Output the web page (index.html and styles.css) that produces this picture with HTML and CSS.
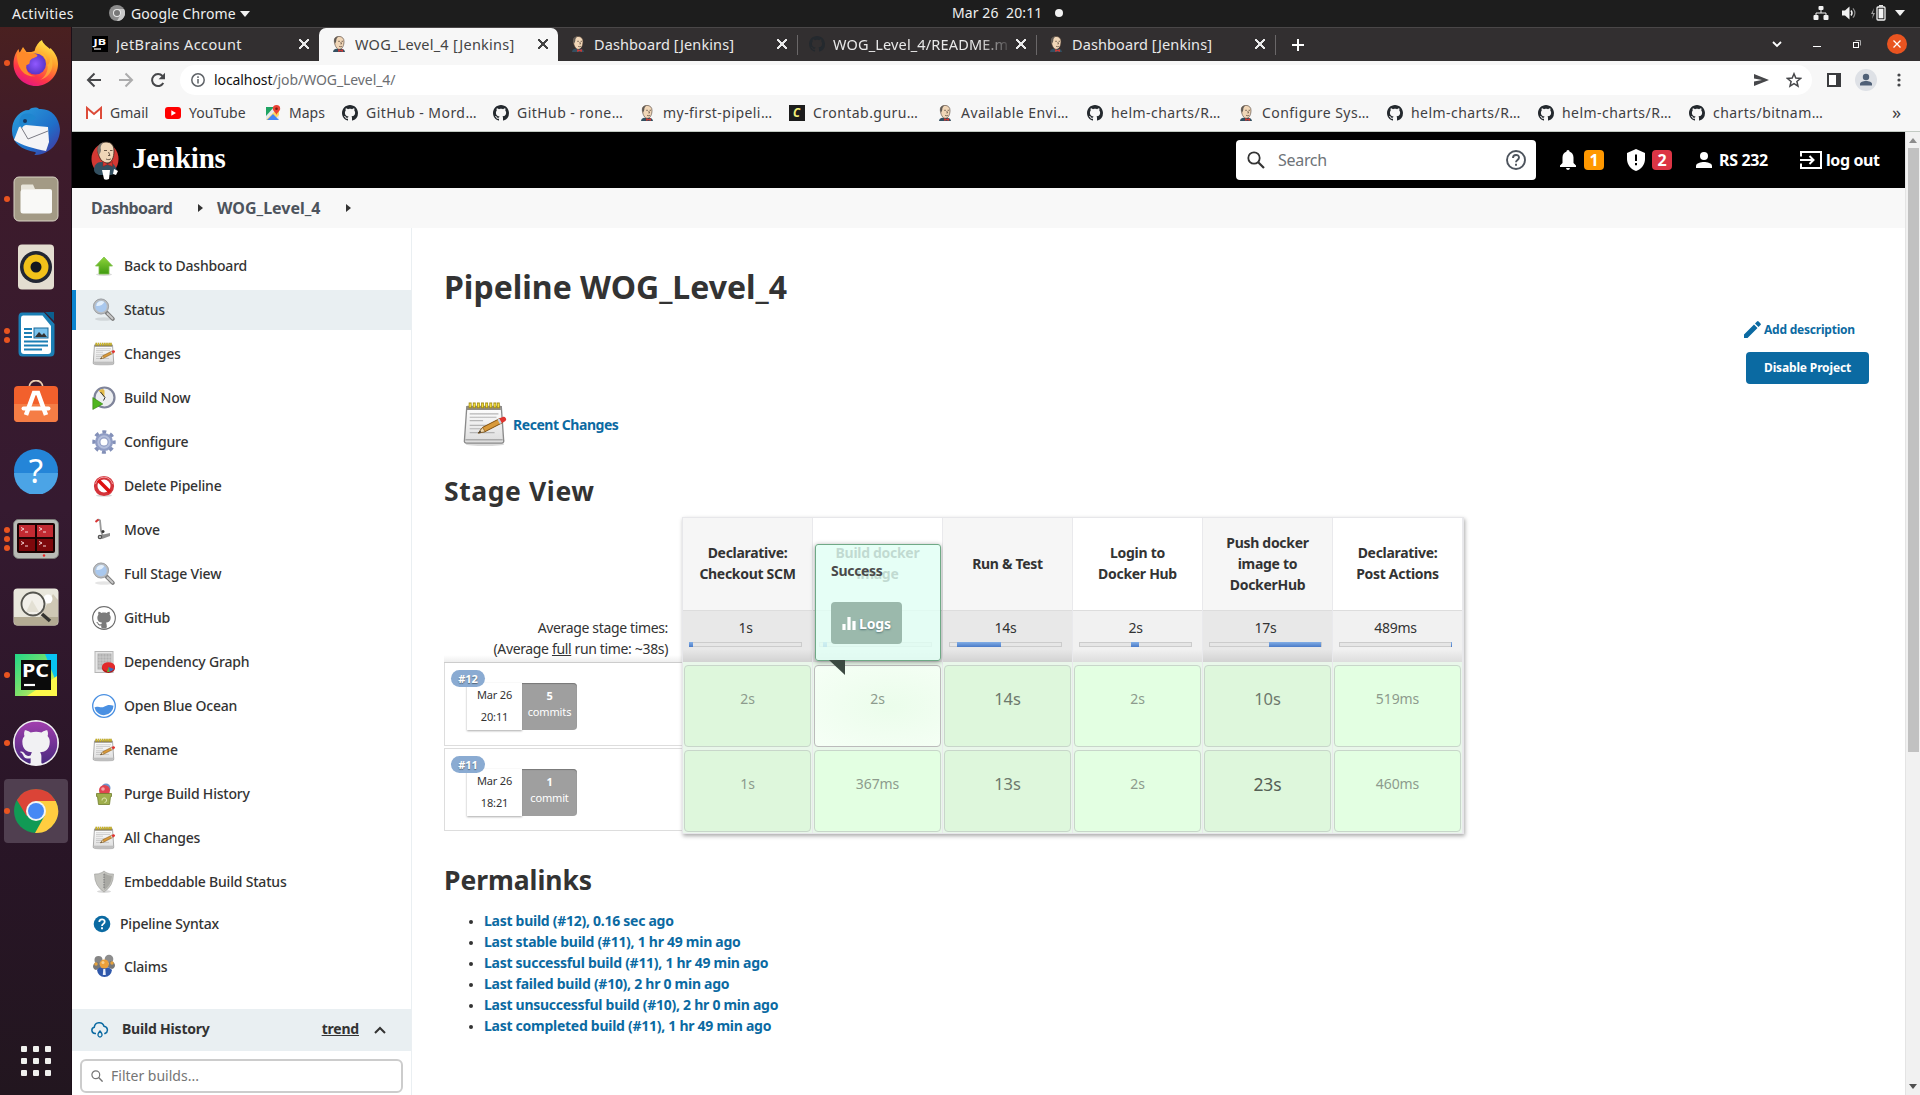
FILE: index.html
```html
<!DOCTYPE html>
<html lang="en">
<head>
<meta charset="utf-8">
<title>WOG_Level_4 [Jenkins]</title>
<link rel="stylesheet" href="styles.css">
</head>
<body>
<svg class="defs" width="0" height="0">
  <defs>
    <linearGradient id="gFox" x1="0.8" y1="0" x2="0.3" y2="1"><stop offset="0" stop-color="#fff44f"/><stop offset="0.4" stop-color="#ff9a2a"/><stop offset="0.75" stop-color="#ff3647"/><stop offset="1" stop-color="#e31587"/></linearGradient>
    <radialGradient id="gOrb"><stop offset="0" stop-color="#9059ff"/><stop offset="1" stop-color="#5b35c8"/></radialGradient>
    <linearGradient id="gBird" x1="0" y1="0" x2="1" y2="1"><stop offset="0" stop-color="#2ba0dd"/><stop offset="0.6" stop-color="#1f6fc9"/><stop offset="1" stop-color="#4a2f9c"/></linearGradient>
    <linearGradient id="gCat" x1="0" y1="0" x2="0" y2="1"><stop offset="0" stop-color="#a13fae"/><stop offset="1" stop-color="#4a2a80"/></linearGradient>
    <linearGradient id="gPage" x1="0" y1="0" x2="0" y2="1"><stop offset="0" stop-color="#fff"/><stop offset="1" stop-color="#dcdcdc"/></linearGradient>
    <linearGradient id="gGreen" x1="0" y1="0" x2="0" y2="1"><stop offset="0" stop-color="#8fd43c"/><stop offset="1" stop-color="#3f9a10"/></linearGradient>
    <linearGradient id="gPy" x1="0" y1="0" x2="1" y2="1"><stop offset="0" stop-color="#21d789"/><stop offset="0.5" stop-color="#7de06a"/><stop offset="1" stop-color="#fcf84a"/></linearGradient>
  </defs>
  <symbol id="octo" viewBox="0 0 16 16"><path d="M8 0C3.58 0 0 3.58 0 8c0 3.54 2.29 6.53 5.47 7.59.4.07.55-.17.55-.38 0-.19-.01-.82-.01-1.49-2.01.37-2.53-.49-2.69-.94-.09-.23-.48-.94-.82-1.13-.28-.15-.68-.52-.01-.53.63-.01 1.08.58 1.23.82.72 1.21 1.87.87 2.33.66.07-.52.28-.87.51-1.07-1.78-.2-3.64-.89-3.64-3.95 0-.87.31-1.59.82-2.15-.08-.2-.36-1.02.08-2.12 0 0 .67-.21 2.2.82.64-.18 1.32-.27 2-.27s1.36.09 2 .27c1.53-1.04 2.2-.82 2.2-.82.44 1.1.16 1.92.08 2.12.51.56.82 1.27.82 2.15 0 3.07-1.87 3.75-3.65 3.95.29.25.54.73.54 1.48 0 1.07-.01 1.93-.01 2.2 0 .21.15.46.55.38A8.01 8.01 0 0016 8c0-4.42-3.58-8-8-8z"/></symbol>
  <symbol id="butler" viewBox="0 0 16 16">
    <path d="M2 16c.2-2 1.300-2.800 3-3.300h5.500c2 .3 3.200 1.300 3.500 3.300z" fill="#335061"/>
    <path d="M3.300 5C3 2 5 .4 8 .4s5.200 2 5 5.200c-.1 3.500-1.300 7.400-4.500 7.700C5.500 13.500 3.500 9 3.300 5z" fill="#f0d6b7" stroke="#4b3b30" stroke-width=".6"/>
    <path d="M3.300 6C2.800 2.500 4.500.6 7.500.4 5.800 1.600 5.200 3 5.300 4.500c0 1-.5 2-1.200 3z" fill="#5f5a55"/>
    <path d="M7.200 5.300h1.700M10.600 5.300h1.500M9.800 6l.7 2h-1M8 10.200c1 .7 2.200.6 3 0" fill="none" stroke="#4b3b30" stroke-width=".7"/>
    <path d="M7.200 13l2.300 1.200 2.400-1.200v2.900l-2.400-1-2.300 1z" fill="#d33833"/>
  </symbol>
  <symbol id="notepad" viewBox="0 0 48 48">
    <ellipse cx="24" cy="45" rx="20" ry="2" fill="#000" opacity=".15"/>
    <path d="M5 6h36l2.500 35.500a2 2 0 0 1-2 2.500H4.500a2 2 0 0 1-2-2.500z" fill="url(#gPage)" stroke="#8b8b8b" stroke-width="1.400"/>
    <path d="M5.500 5h35v4.500H5z" fill="#8f8a80"/><path d="M3.500 40.500h39" stroke="#aaa" stroke-width="1.600"/>
    <path d="M8.500 1.500v6m4.300-6v6m4.300-6v6m4.300-6v6m4.300-6v6m4.300-6v6m4.300-6v6m3.600-6v6" stroke="#a28a12" stroke-width="3"/>
    <path d="M8.500 2.500v4m4.300-4v4m4.300-4v4m4.300-4v4m4.300-4v4m4.300-4v4m4.300-4v4m3.600-4v4" stroke="#f2df3e" stroke-width="1.500"/>
    <path d="M8 13.500h30M8 17h28M8 20.500h14M8 25.500h22M8 29h14M8 33h26" stroke="#b5b5b5" stroke-width="1.200"/>
    <path d="M17 33.500l4.500-6L40 18l2.500 4.500L24 32z" fill="#d99a3a" stroke="#7d4c0c" stroke-width="1"/>
    <path d="M17 33.500l4.500-6 2.500 4.500z" fill="#f0d7ab" stroke="#6b4a1a" stroke-width=".6"/><path d="M17 33.500l2-2.400 1 1.500z" fill="#222"/>
    <path d="M38.500 18.500l2.500 4.700 4-2.200c1.500-1 1.300-2 .6-3.200-.8-1.300-1.900-1.700-3.200-1.200z" fill="#e0342f"/><path d="M37 19.300l2.500 4.700 2-1-2.500-4.700z" fill="#c9d2e0"/>
  </symbol>
  <symbol id="magnify" viewBox="0 0 24 24">
    <ellipse cx="12" cy="21" rx="9" ry="1.800" fill="#000" opacity=".1"/>
    <path d="M14.500 14.500l6.300 6.300" stroke="#7d7d7d" stroke-width="4" stroke-linecap="round"/><path d="M15.500 15.500l5 5" stroke="#c9c9c9" stroke-width="1.800" stroke-linecap="round"/>
    <circle cx="9" cy="8.500" r="6.800" fill="#a9c8ee" stroke="#b9bcc0" stroke-width="2"/><path d="M4.300 8a5 5 0 0 1 8-4c-1 2.500-4.500 4.500-8 4z" fill="#e3effb"/>
    <circle cx="9" cy="8.500" r="7.600" fill="none" stroke="#83878c" stroke-width=".6"/>
  </symbol>
</svg>

<div class="desktop">
  <header class="topbar">
    <div class="topbar-left">
      <span class="activities">Activities</span>
      <svg class="app-ico" width="16" height="16" viewBox="0 0 16 16"><circle cx="8" cy="8" r="8" fill="#8c8c8c"/><path d="M8 4h7a8 8 0 0 1-7 12l4-7z" fill="#c8c8c8"/><circle cx="8" cy="8" r="4" fill="#e9e9e9"/><circle cx="8" cy="8" r="3" fill="#777"/></svg>
      <span class="app-name">Google Chrome</span>
      <i class="caret"></i>
    </div>
    <div class="clock"><span>Mar 26&nbsp; 20:11</span><i class="dot"></i></div>
    <div class="tray">
      <svg width="16" height="14" viewBox="0 0 16 14"><path d="M8 4v3M3 10V7h10v3" fill="none" stroke="#f2f2f2"/><rect x="5.500" y="0" width="5" height="4" rx="1" fill="#f2f2f2"/><rect x="0.500" y="9" width="5" height="5" rx="1" fill="#f2f2f2"/><rect x="10.500" y="9" width="5" height="5" rx="1" fill="#f2f2f2"/></svg>
      <svg width="16" height="14" viewBox="0 0 16 14"><path d="M0 4.500h3L7.500.5v13L3 9.500H0z" fill="#f2f2f2"/><path d="M9 4.500q2 2.500 0 5" fill="none" stroke="#f2f2f2" stroke-width="1.500"/><path d="M11 2.300q3.800 4.700 0 9.400" fill="none" stroke="#8c8c8c" stroke-width="1.200"/></svg>
      <svg width="16" height="16" viewBox="0 0 16 16"><path d="M4 3L1 9h2l-1 5 3-6H3z" fill="#9a9a9a"/><rect x="7" y="2" width="8" height="13" rx="1" fill="none" stroke="#f2f2f2" stroke-width="1.300"/><path d="M9 .8h4" stroke="#f2f2f2" stroke-width="1.500"/><rect x="8.600" y="3.700" width="4.800" height="9.600" fill="#f2f2f2"/></svg>
      <i class="caret"></i>
    </div>
  </header>

  <div class="workspace">
    <nav class="dock">
      <div class="app"><i class="run one"></i><svg width="48" height="48" viewBox="0 0 48 48"><path d="M46 25c0 12-10 22-22 22S1.500 37 1.500 25c0-7 2.500-12 5-15l1 4 3.500-6 3.500 5c4 0 6 0 8-1 1-5 4-9 7.500-11 1 4 5 6 8 9l.5-1c5 5 7.500 10 7.500 16z" fill="url(#gFox)"/><circle cx="23.500" cy="25" r="10.500" fill="url(#gOrb)"/><path d="M5 15c4-4 9-2 12 0 4-1 8 0 8.500 1.500-1 2.500-5 2-7 4.500-2 2 1 4-4 5-1.500 6 3.500 11 9 11-11 2-19-8-18.500-22z" fill="#ff8a2a"/><path d="M27 13c7 2 9 8 8 14 3-3 4-7 3-11 6 10 1 22-10 25 9-5 12-19-1-28z" fill="#ffc23a" opacity=".6"/></svg></div>
      <div class="app"><svg width="48" height="48" viewBox="0 0 48 48"><path d="M17 3c3-3 8-3 10-1 12-1 20 8 21 20 0 14-10 25-24 26-4 0 2-2-1-3C10 43 0 36 0 24c0-8 3-13 6-16 3-3 6-5 11-5z" fill="url(#gBird)"/><path d="M14 18L36 20l1 15-3 9C24 42 8 38 2 33l5-13z" fill="#f4f4f6"/><path d="M9 20l7 12 20-8" fill="none" stroke="#7b7b84" stroke-width="1"/><path d="M10 8c5-3 12-1 14 3-5 4-10 4-14 10-4-4-3-9 0-13z" fill="#1f86cf"/><circle cx="13" cy="14" r="2" fill="#17375e"/></svg></div>
      <div class="app"><i class="run one"></i><svg width="46" height="46" viewBox="0 0 46 46"><rect x="1" y="1" width="44" height="44" rx="5" fill="#a39a85" stroke="#d8d3c4"/><path d="M8 10q0-1.500 1.500-1.500h10.500l2 4.500H37q2 0 2 2v20q0 2-2 2H10q-2 0-2-2z" fill="#e8e5da"/><rect x="7.500" y="13.500" width="31.500" height="24" rx="2.500" fill="#f9f9f7"/></svg></div>
      <div class="app"><svg width="46" height="46" viewBox="0 0 46 46"><rect x="5" y="0.500" width="36" height="45" rx="4" fill="#e3ddd0"/><circle cx="23" cy="23" r="16" fill="#222733"/><circle cx="23" cy="23" r="12.500" fill="#f2c21a"/><circle cx="23" cy="23" r="5.500" fill="#15181f"/></svg></div>
      <div class="app"><i class="run two"></i><svg width="46" height="46" viewBox="0 0 46 46"><path d="M9 .5h22L41.500 12v28q0 4.500-4 4.500H9.500q-4 0-4-4.500V5q0-4.500 3.500-4.500z" fill="#1b7fb5"/><path d="M10 3.500h19.500L38 14v25q0 3-3 3H11q-3 0-3-3V6q0-2.500 2-2.500z" fill="#fff"/><path d="M32 0h9v9z" fill="#0b5f8f"/><path d="M11 17h8M11 21h8M11 25h8M11 29.500h24M11 33.500h24M11 37.500h18" stroke="#1b7fb5" stroke-width="2"/><rect x="21" y="16" width="14" height="10" fill="#7cc4ee" stroke="#1b6a99" stroke-width="1"/><path d="M22 25l4-5 3 3 2-2 3 4z" fill="#333"/></svg></div>
      <div class="app"><svg width="46" height="46" viewBox="0 0 46 46"><path d="M16 8c0-10 14-10 14 0" fill="none" stroke="#e9cdb0" stroke-width="1.800"/><rect x="1" y="6" width="44" height="36" rx="4" fill="#f2602c"/><path d="M1 24h44v14q0 4-4 4H5q-4 0-4-4z" fill="#f57d45"/><path d="M13 35l8-22h4l8 22" fill="none" stroke="#fff" stroke-width="4.500"/><path d="M10.500 28.500h25" stroke="#fff" stroke-width="4" stroke-linecap="round"/></svg></div>
      <div class="app"><svg width="46" height="46" viewBox="0 0 46 46"><circle cx="23" cy="23" r="22" fill="#2485d8"/><path d="M1 25a22 22 0 0 0 44 0z" fill="#4ba4e6"/><text x="23" y="34.500" text-anchor="middle" font-size="33" fill="#fff" class="glyph">?</text></svg></div>
      <div class="app"><i class="run three"></i><svg width="46" height="40" viewBox="0 0 46 40"><rect x="0.500" y="0.500" width="45" height="39" rx="5" fill="#b9bbb6" stroke="#7a7c78"/><rect x="4" y="4" width="38" height="30" rx="2" fill="#1a0203"/><path d="M6 6h16v12H6zM24 6h16v12H24z" fill="#c22a32"/><path d="M6 20h16v12H6zM24 20h16v12H24z" fill="#7d080c"/><path d="M8 8.500l3 1.500-3 1.500M12 13h3M26 8.500l3 1.500-3 1.500M30 13h3M8 22.500l3 1.500-3 1.500M12 27h3M26 22.500l3 1.500-3 1.500M30 27h3" stroke="#f3d6d6" fill="none"/><circle cx="31" cy="36.500" r="1.200" fill="#e22"/></svg></div>
      <div class="app"><svg width="46" height="38" viewBox="0 0 46 38"><rect x="0.500" y="0.500" width="45" height="37" rx="4" fill="#e9e7dc"/><path d="M26 30L40 6l5 6v18z" fill="#cfc8b5"/><path d="M1 29h44v5q0 3.500-4 3.500H5q-4 0-4-3.500z" fill="#b3ab93"/><circle cx="35" cy="11" r="4.500" fill="#fff"/><circle cx="20" cy="16" r="11.500" fill="#f4f3ee" fill-opacity=".8" stroke="#55554f" stroke-width="1.800"/><path d="M13 24l6-12 7 12z" fill="#e3e0d4"/><path d="M29 26l8 7" stroke="#33332f" stroke-width="3.500"/></svg></div>
      <div class="app"><i class="run one"></i><svg width="42" height="42" viewBox="0 0 42 42"><rect width="42" height="42" fill="url(#gPy)"/><path d="M30 0h12v30z" fill="#07c3f2"/><path d="M42 22v20H12z" fill="#fcf84a"/><rect x="6" y="6" width="30" height="30" fill="#0b0b0b"/><text x="7" y="23" font-size="18" font-weight="700" fill="#fff" textLength="27" lengthAdjust="spacingAndGlyphs" class="glyph">PC</text><path d="M9 31h11" stroke="#fff" stroke-width="2.200"/></svg></div>
      <div class="app"><i class="run one"></i><svg width="46" height="46" viewBox="0 0 46 46"><circle cx="23" cy="23" r="23" fill="#f1f1f3"/><g fill="url(#gCat)"><use href="#octo" x="1.500" y="1.500" width="43" height="43"/></g></svg></div>
      <div class="app active"><i class="run one"></i><svg width="46" height="46" viewBox="0 0 46 46"><circle cx="23" cy="23" r="22" fill="#119a55"/><path d="M3.900 12a22 22 0 0 1 38.200 0L42 14H23l-9.500 14z" fill="#db4437"/><path d="M23 13h19.700A22 22 0 0 1 22 45l9.500-17z" fill="#ffcd40"/><circle cx="23" cy="23" r="10" fill="#f4f4f4"/><circle cx="23" cy="23" r="8" fill="#4688f4"/></svg></div>
      <div class="grid9"><i></i><i></i><i></i><i></i><i></i><i></i><i></i><i></i><i></i></div>
    </nav>

    <div class="browser">
      <div class="tabs">
        <div class="tab wide"><svg width="16" height="16" viewBox="0 0 16 16"><rect width="16" height="16" fill="#000"/><text x="1.500" y="8.800" font-size="9" font-weight="700" fill="#fff" textLength="12.500" lengthAdjust="spacingAndGlyphs" class="glyph">JB</text><path d="M2 13h7" stroke="#fff" stroke-width="1.200"/></svg><span>JetBrains Account</span><b class="x"></b></div>
        <div class="tab on"><svg width="16" height="16"><use href="#butler"/></svg><span>WOG_Level_4 [Jenkins]</span><b class="x"></b></div>
        <div class="tab sep"><svg width="16" height="16"><use href="#butler"/></svg><span>Dashboard [Jenkins]</span><b class="x"></b></div>
        <div class="tab sep"><svg width="16" height="16" fill="#24292e"><use href="#octo"/></svg><span class="fade">WOG_Level_4/README.m</span><b class="x"></b></div>
        <div class="tab sep"><svg width="16" height="16"><use href="#butler"/></svg><span>Dashboard [Jenkins]</span><b class="x"></b></div>
        <i class="tabend"></i>
        <svg class="plus" width="14" height="14" viewBox="0 0 14 14"><path d="M7 1v12M1 7h12" stroke="#fff" stroke-width="2"/></svg>
        <div class="winctl">
          <svg width="12" height="12" viewBox="0 0 12 12"><path d="M2 4l4 4 4-4" fill="none" stroke="#fff" stroke-width="1.800"/></svg>
          <svg width="12" height="12" viewBox="0 0 12 12"><path d="M2 8.500h8" stroke="#fff"/></svg>
          <svg width="12" height="12" viewBox="0 0 12 12"><path d="M4.500 2.500h5v5" fill="none" stroke="#aaa"/><rect x="2.500" y="4.500" width="5" height="5" fill="none" stroke="#fff"/></svg>
          <svg width="20" height="20" viewBox="0 0 20 20"><circle cx="10" cy="10" r="10" fill="#e95420"/><path d="M6.500 6.500l7 7m0-7l-7 7" stroke="#fff" stroke-width="1.300"/></svg>
        </div>
      </div>
      <div class="toolbar">
        <div class="navs">
          <svg width="16" height="16" viewBox="0 0 16 16"><path d="M15 8H2.500M8.500 1.500L2 8l6.500 6.500" fill="none" stroke="#46474a" stroke-width="2"/></svg>
          <svg width="16" height="16" viewBox="0 0 16 16"><path d="M1 8h12.500M7.500 1.500L14 8l-6.500 6.500" fill="none" stroke="#acacad" stroke-width="2"/></svg>
          <svg width="16" height="16" viewBox="0 0 16 16"><path d="M13.300 11A6 6 0 1 1 12.500 4" fill="none" stroke="#46474a" stroke-width="2"/><path d="M15 .8v6.400H8.600z" fill="#46474a"/></svg>
        </div>
        <div class="omnibox">
          <svg width="14" height="14" viewBox="0 0 14 14"><circle cx="7" cy="7" r="6.200" fill="none" stroke="#5f6368" stroke-width="1.500"/><path d="M7 6v4.500M7 3.300v1.600" stroke="#5f6368" stroke-width="1.500"/></svg>
          <span class="url"><b>localhost</b>/job/WOG_Level_4/</span>
          <svg width="15" height="12" viewBox="0 0 15 12"><path d="M0 0l15 6-15 6V7.500L8 6 0 4.500z" fill="#46474a"/></svg>
          <svg width="16" height="16" viewBox="0 0 16 16"><path d="M8 1.800l1.800 4.300 4.700.4-3.600 3 1.100 4.600L8 11.700 4 14.100l1.100-4.600-3.600-3 4.700-.4z" fill="none" stroke="#46474a" stroke-width="1.500"/></svg>
        </div>
        <svg class="panel" width="14" height="14" viewBox="0 0 14 14"><rect x="1" y="1" width="12" height="12" fill="#fff" stroke="#3b3c3f" stroke-width="2"/><path d="M9 1h4v12H9z" fill="#3b3c3f"/></svg>
        <svg class="avatar" width="22" height="22" viewBox="0 0 22 22"><circle cx="11" cy="11" r="11" fill="#dee1e6"/><circle cx="11" cy="8" r="3.200" fill="#4f6077"/><path d="M5 16.500v-1.500c0-2 3-3 6-3s6 1 6 3v1.500z" fill="#4f6077"/></svg>
        <svg width="4" height="14" viewBox="0 0 4 14"><circle cx="2" cy="2" r="1.600" fill="#46474a"/><circle cx="2" cy="7" r="1.600" fill="#46474a"/><circle cx="2" cy="12" r="1.600" fill="#46474a"/></svg>
      </div>
      <div class="bookmarks">
        <a><svg width="16" height="14" viewBox="0 0 16 14"><path d="M1 13V2l7 6 7-6v11" fill="#fff" stroke="#dd4b39" stroke-width="2"/></svg>Gmail</a>
        <a><svg width="16" height="12" viewBox="0 0 16 12"><rect width="16" height="12" rx="3" fill="#f00"/><path d="M6.300 3.300v5.400L11 6z" fill="#fff"/></svg>YouTube</a>
        <a><svg width="16" height="16" viewBox="0 0 16 16"><rect x="1" y="2" width="13" height="13" rx="1" fill="#e8eaed"/><path d="M1 2h8L1 11z" fill="#1fa463"/><path d="M1 15L13 3l1 2v5L9 15z" fill="#fdd663"/><path d="M2 15l6-6 6 6z" fill="#4285f4"/><path d="M11.500 0a3.700 3.700 0 0 0-3.700 3.700c0 2.500 3 3.300 3.700 6.300.7-3 3.700-3.800 3.700-6.300A3.700 3.700 0 0 0 11.500 0z" fill="#ea4335"/><circle cx="11.500" cy="3.700" r="1.300" fill="#7d1c12"/></svg>Maps</a>
        <a><svg width="16" height="16" fill="#24292e"><use href="#octo"/></svg>GitHub - Mord…</a>
        <a><svg width="16" height="16" fill="#24292e"><use href="#octo"/></svg>GitHub - rone…</a>
        <a><svg width="16" height="16"><use href="#butler"/></svg>my-first-pipeli…</a>
        <a><svg width="16" height="16" viewBox="0 0 16 16"><rect width="16" height="16" fill="#1c1c1c"/><text x="4" y="12.300" font-size="11.500" font-style="italic" font-weight="700" fill="#f5f07a" class="glyph">C</text></svg>Crontab.guru…</a>
        <a><svg width="16" height="16"><use href="#butler"/></svg>Available Envi…</a>
        <a><svg width="16" height="16" fill="#24292e"><use href="#octo"/></svg>helm-charts/R…</a>
        <a><svg width="16" height="16"><use href="#butler"/></svg>Configure Sys…</a>
        <a><svg width="16" height="16" fill="#24292e"><use href="#octo"/></svg>helm-charts/R…</a>
        <a><svg width="16" height="16" fill="#24292e"><use href="#octo"/></svg>helm-charts/R…</a>
        <a><svg width="16" height="16" fill="#24292e"><use href="#octo"/></svg>charts/bitnam…</a>
        <span class="more">»</span>
      </div>

      <div class="viewport">
        <div class="page">
          <div class="jheader">
            <svg class="jlogo" width="28" height="39" viewBox="0 0 28 39"><ellipse cx="14" cy="18" rx="13.500" ry="15.500" fill="#d33833"/><path d="M3 29c0-5 3-8 7-8h8c5 1 7 5 8 9-2 2-4 4-7 4H8c-3-1-5-3-5-5z" fill="#335061"/><path d="M7 11C6 5 10 1 15 1s8 3 8 9c0 6-2 12-7 12S8 17 7 11z" fill="#f0d6b7" stroke="#33251b" stroke-width=".8"/><path d="M7 12C5 6 8 2 13 1.200 10 3 9 6 10 9c0 2-1 3-2 5z" fill="#7a746e"/><path d="M13 9.500h3M19 9.500h2.500M17.500 11l1.500 3.500h-2M15 18c2 1 4 .7 5-.3" stroke="#4b3b30" fill="none" stroke-width=".8"/><path d="M12 20.500l4.500 2.500 5-2.500v5l-5-2-4.500 2z" fill="#d33833" stroke="#81201c" stroke-width=".5"/><path d="M11 29h8l-1 9c-2 1-4 1-5 0zM23 28l4 2-2 4-3-1z" fill="#fff"/></svg>
            <span class="brand">Jenkins</span>
            <div class="search">
              <svg width="18" height="18" viewBox="0 0 18 18"><circle cx="7" cy="7" r="5.700" fill="none" stroke="#333" stroke-width="1.800"/><path d="M11.200 11.200l5.800 5.800" stroke="#333" stroke-width="2.200"/></svg>
              <span>Search</span>
              <svg width="20" height="20" viewBox="0 0 20 20"><circle cx="10" cy="10" r="9" fill="none" stroke="#4d545d" stroke-width="1.900"/><path d="M7 8c0-4 6-4 6-.5C13 10 10 9.800 10 12.300" fill="none" stroke="#4d545d" stroke-width="1.900"/><path d="M10 13.700v2" stroke="#4d545d" stroke-width="1.900"/></svg>
            </div>
            <svg class="bell" width="16" height="20" viewBox="0 0 16 20"><path d="M8 0a1.600 1.600 0 0 1 1.600 1.700C12 2.500 13.500 4.500 13.500 7.500v5.500L16 15.500V17H0v-1.500L2.500 13V7.500c0-3 1.500-5 3.900-5.800A1.600 1.600 0 0 1 8 0zM6 18h4q-.3 2-2 2t-2-2z" fill="#fff"/></svg>
            <span class="badge warn">1</span>
            <svg class="shield" width="18" height="22" viewBox="0 0 18 22"><path d="M9 0l9 4v6c0 5.500-3.800 10.500-9 12-5.200-1.500-9-6.500-9-12V4z" fill="#fff"/><path d="M9 5.500v6.500M9 14v2.200" stroke="#000" stroke-width="2"/></svg>
            <span class="badge alert">2</span>
            <svg class="user" width="16" height="16" viewBox="0 0 16 16"><circle cx="8" cy="4" r="4" fill="#fff"/><path d="M0 16v-2c0-3 5-4 8-4s8 1 8 4v2z" fill="#fff"/></svg>
            <span class="uname">RS 232</span>
            <svg class="exit" width="22" height="18" viewBox="0 0 22 18"><path d="M1 5.500V1h20v16H1v-4.500" fill="none" stroke="#fff" stroke-width="2"/><path d="M0 9h13M9.500 5l4 4-4 4" fill="none" stroke="#fff" stroke-width="2"/></svg>
            <span class="logout">log out</span>
          </div>
          <div class="crumbs"><span class="c1">Dashboard</span><i></i><span class="c2">WOG_Level_4</span><i></i></div>

          <div class="body">
            <aside class="side">
              <ul class="tasks">
                <li><svg width="24" height="24" viewBox="0 0 24 24"><ellipse cx="12" cy="20.500" rx="8" ry="1.500" opacity=".15"/><path d="M12 3l8.500 9H17v8H7v-8H3.500z" fill="url(#gGreen)" stroke="#7fc04a" stroke-width=".8"/></svg>Back to Dashboard</li>
                <li class="sel"><svg width="24" height="24"><use href="#magnify"/></svg>Status</li>
                <li><svg width="24" height="24"><use href="#notepad"/></svg>Changes</li>
                <li><svg width="24" height="24" viewBox="0 0 24 24"><circle cx="12.500" cy="11.500" r="10" fill="#eceef0" stroke="#7f849a" stroke-width="2.200"/><path d="M12.500 11.500L6.500 4.500q5-3 6 0z" fill="#e2bb4a"/><path d="M8.500 6l4.500 5.500-1.500 3" stroke="#333" fill="none"/><path d="M.8 11.500v12l10-5.500z" fill="#4fb51e" stroke="#358010" stroke-width=".6"/></svg>Build Now</li>
                <li><svg width="24" height="24" viewBox="0 0 24 24"><circle cx="12" cy="12" r="6.300" fill="none" stroke="#8f9cc4" stroke-width="5.500"/><circle cx="12" cy="12" r="10.200" fill="none" stroke="#8390b8" stroke-width="3" stroke-dasharray="4 4.010" stroke-dashoffset="2"/><circle cx="12" cy="12" r="5.700" fill="none" stroke="#b4bedb" stroke-width="2"/></svg>Configure</li>
                <li><svg width="24" height="24" viewBox="0 0 24 24"><ellipse cx="12" cy="21.500" rx="8" ry="1.300" opacity=".15"/><circle cx="12" cy="12" r="8.300" fill="#fff" stroke="#d4333a" stroke-width="3.600"/><path d="M6 6l12 12" stroke="#d11" stroke-width="3.600"/><path d="M3.500 10a8.700 8.700 0 0 1 17 0" stroke="#ef9a9d" stroke-width="1" fill="none"/></svg>Delete Pipeline</li>
                <li><svg width="24" height="24" viewBox="0 0 24 24"><path d="M4 3.500q2-3 4-1l1 10 2 6" fill="none" stroke="#9a9a9a" stroke-width="1.800"/><path d="M3.500 4l3-2.500" stroke="#d33" stroke-width="1.800"/><path d="M9 17l9-2v3l-8 3z" fill="#8e8e8e"/><circle cx="8" cy="19" r="2.300" fill="#555"/><circle cx="8" cy="19" r=".9" fill="#ddd"/><circle cx="11" cy="13.500" r="1.500" fill="#333"/></svg>Move</li>
                <li><svg width="24" height="24"><use href="#magnify"/></svg>Full Stage View</li>
                <li><svg width="24" height="24" viewBox="0 0 24 24"><circle cx="12" cy="12" r="11.300" fill="#fff" stroke="#6f6f6f" stroke-width="1.200"/><circle cx="12" cy="12" r="9.500" fill="#7b7b7b"/><g fill="#fff"><use href="#octo" x="1.500" y="1.500" width="21" height="21"/></g><path d="M9.500 19.500h5v3h-5z" fill="#7b7b7b"/></svg>GitHub</li>
                <li><svg width="24" height="24" viewBox="0 0 24 24"><rect x="3" y="1.500" width="18" height="21" fill="#e6e6e6" stroke="#b5b5b5"/><path d="M5.500 3.500h14v16h-14z" fill="#b0b0b0"/><path d="M8 3.500v16M11 3.500v16M14 3.500v16M17 3.500v16M5.500 7h14M5.500 10h14M5.500 13h14M5.500 16h14" stroke="#d8d8d8" stroke-width=".6"/><ellipse cx="16.500" cy="18" rx="6.500" ry="5" fill="#b01515"/><ellipse cx="16.500" cy="16.800" rx="6.500" ry="4.500" fill="#e2292b"/><path d="M16.500 17l5.500 2q-2 2.500-5.500 3z" fill="#3b6cc0"/><path d="M16.500 17l-1.500 5h2.500z" fill="#5bb52c"/></svg>Dependency Graph</li>
                <li><svg width="24" height="24" viewBox="0 0 24 24"><circle cx="12" cy="12" r="11.300" fill="#fff" stroke="#4a90e2" stroke-width="1.300"/><path d="M2.500 13.500c3-2.500 6 1.500 10-1 3-2 5.500-2 9-.8A9.600 9.600 0 0 1 2.500 13.500z" fill="#4a90e2"/></svg>Open Blue Ocean</li>
                <li><svg width="24" height="24"><use href="#notepad"/></svg>Rename</li>
                <li><svg width="24" height="24" viewBox="0 0 24 24"><circle cx="14" cy="6" r="4.500" fill="#6d93cb"/><circle cx="12.500" cy="8.500" r="5.500" fill="#e04450"/><circle cx="11" cy="7" r="1.800" fill="#f7a3aa"/><path d="M4.500 11.500h15v3h-1l-1 8h-11l-1-8h-1z" fill="#9fae4c" stroke="#6f7c2b" stroke-width=".8"/><path d="M10 18.500a2.300 2.300 0 1 1 2.500 2" fill="none" stroke="#dfe6b0"/></svg>Purge Build History</li>
                <li><svg width="24" height="24"><use href="#notepad"/></svg>All Changes</li>
                <li><svg width="24" height="24" viewBox="0 0 24 24"><ellipse cx="12" cy="21.500" rx="7" ry="1.500" opacity=".15"/><path d="M12 1l2 1.500q4 2 7.500 1.500 0 12-9.500 18-9.500-6-9.500-18Q6 4.500 10 2.500z" fill="#c4c4bf" stroke="#9b9b97" stroke-width=".6"/><path d="M12 3q4 3 8 3-1 10-8 14z" fill="#a9a9a4"/><path d="M12 4v15" stroke="#777" stroke-dasharray="1.500 1"/></svg>Embeddable Build Status</li>
                <li class="syntax"><svg width="18" height="18" viewBox="0 0 18 18"><circle cx="9" cy="9" r="8.300" fill="#0b6aa2"/><path d="M6.300 7c0-3.500 5.400-3.500 5.400-.3C11.700 9 9 8.800 9 11" fill="none" stroke="#fff" stroke-width="1.800"/><path d="M9 12.300v2" stroke="#fff" stroke-width="1.900"/></svg>Pipeline Syntax</li>
                <li class="claims"><svg width="24" height="24" viewBox="0 0 24 24"><circle cx="6.500" cy="6" r="4" fill="#858585"/><circle cx="17" cy="5" r="4.300" fill="#8d8d8d"/><path d="M1 12q1-4 5-4l4 5-6 3q-3-1-3-4zM23 11q-1-4-5-4l-3 6 5 2q3-1 3-4z" fill="#777"/><circle cx="4" cy="10" r="1.700" fill="#e6a23c"/><circle cx="20" cy="9" r="1.700" fill="#e6a23c"/><path d="M5 16q1-3 7-3t8 3q-1 6.500-7.500 7Q6 22.500 5 16z" fill="#2f58ab"/><path d="M11.300 15h2l.5 6h-3z" fill="#e8eefb"/><circle cx="12.300" cy="10" r="4.600" fill="#eba03a"/><circle cx="11" cy="8.500" r="1.500" fill="#f7cf8d"/></svg>Claims</li>
              </ul>
              <div class="bh-head">
                <svg width="18" height="16" viewBox="0 0 18 16"><path d="M5 11.500H4A3.200 3.200 0 0 1 3.300 5.200 5 5 0 0 1 13 4.200a3.800 3.800 0 0 1 1 7.300h-.8" fill="none" stroke="#0b6aa2" stroke-width="1.500"/><path d="M9 9q2.600 3 1.900 4.600a2 2 0 0 1-3.800 0Q6.400 12 9 9z" fill="none" stroke="#0b6aa2" stroke-width="1.300"/></svg>
                <span class="bh-title">Build History</span>
                <span class="trend">trend</span>
                <svg width="12" height="8" viewBox="0 0 12 8"><path d="M1 7l5-5 5 5" fill="none" stroke="#333" stroke-width="2"/></svg>
              </div>
              <div class="filter"><svg width="12" height="12" viewBox="0 0 12 12"><circle cx="4.800" cy="4.800" r="3.900" fill="none" stroke="#757575" stroke-width="1.200"/><path d="M7.600 7.600l4 4" stroke="#757575" stroke-width="1.400"/></svg><span>Filter builds...</span></div>
            </aside>

            <main class="main">
              <h1>Pipeline WOG_Level_4</h1>
              <div class="actions">
                <a class="desc"><svg width="17" height="17" viewBox="0 0 17 17"><path d="M0 13.500L10 3.500 13.500 7l-10 10H0zM11 2.500L13 .5q.8-.8 1.600 0l1.900 1.900q.8.800 0 1.600l-2 2z" fill="#0b6aa2"/></svg><span>Add description</span></a>
                <button class="disable">Disable Project</button>
              </div>
              <a class="recent"><svg width="46" height="46"><use href="#notepad"/></svg><span>Recent Changes</span></a>
              <h2>Stage View</h2>

              <div class="stageview">
                <div class="left">
                  <div class="legend"><div>Average stage times:</div><div>(Average <u>full</u> run time: ~38s)</div></div>
                  <div class="build"><div class="pill">#12</div><div class="info"><div class="date">Mar 26<br>20:11</div><div class="commits"><b>5</b><br>commits</div></div></div>
                  <div class="build"><div class="pill">#11</div><div class="info"><div class="date">Mar 26<br>18:21</div><div class="commits"><b>1</b><br>commit</div></div></div>
                </div>
                <div class="stages">
                  <div class="col odd"><div class="name">Declarative:<br>Checkout SCM</div><div class="avg">1s<div class="bar p1"><i></i></div></div><div class="run-cell"><div>2s</div></div><div class="run-cell"><div>1s</div></div></div>
                  <div class="col"><div class="name">Build docker<br>image</div><div class="avg">1s<div class="bar p2"><i></i></div></div><div class="run-cell hot"><div>2s</div></div><div class="run-cell"><div>367ms</div></div>
                    <div class="popup"><div class="ok">Success</div><div class="logs"><svg width="14" height="14" viewBox="0 0 14 14"><path d="M2 14V8M7 14V1M12 14V5" stroke="#fff" stroke-width="3.200"/></svg>Logs</div><i class="tip"></i></div>
                  </div>
                  <div class="col odd"><div class="name">Run &amp; Test</div><div class="avg">14s<div class="bar p3"><i></i></div></div><div class="run-cell mid"><div>14s</div></div><div class="run-cell mid"><div>13s</div></div></div>
                  <div class="col"><div class="name">Login to<br>Docker Hub</div><div class="avg">2s<div class="bar p4"><i></i></div></div><div class="run-cell"><div>2s</div></div><div class="run-cell"><div>2s</div></div></div>
                  <div class="col odd"><div class="name">Push docker<br>image to<br>DockerHub</div><div class="avg">17s<div class="bar p5"><i></i></div></div><div class="run-cell mid"><div>10s</div></div><div class="run-cell big"><div>23s</div></div></div>
                  <div class="col"><div class="name">Declarative:<br>Post Actions</div><div class="avg">489ms<div class="bar p6"><i></i></div></div><div class="run-cell"><div>519ms</div></div><div class="run-cell"><div>460ms</div></div></div>
                </div>
              </div>

              <h2 class="perma">Permalinks</h2>
              <ul class="links">
                <li><a>Last build (#12), 0.16 sec ago</a></li>
                <li><a>Last stable build (#11), 1 hr 49 min ago</a></li>
                <li><a>Last successful build (#11), 1 hr 49 min ago</a></li>
                <li><a>Last failed build (#10), 2 hr 0 min ago</a></li>
                <li><a>Last unsuccessful build (#10), 2 hr 0 min ago</a></li>
                <li><a>Last completed build (#11), 1 hr 49 min ago</a></li>
              </ul>
            </main>
          </div>
        </div>
        <div class="scrollbar"><i class="up"></i><div class="thumb"></div><i class="down"></i></div>
      </div>
    </div>
  </div>
</div>
</body>
</html>
```
FILE: styles.css
```css
* { box-sizing: border-box; }
body { margin: 0; font-family: "Noto Sans", sans-serif; font-size: 14px; letter-spacing: -.3px; color: #333; overflow: hidden; }
svg { flex: none; display: block; }
.defs { position: absolute; }
.glyph { font-family: "Noto Sans", sans-serif; letter-spacing: 0; }
.desktop { width: 1920px; height: 1095px; display: flex; flex-direction: column; white-space: nowrap; }

/* system bar */
.topbar { height: 27px; flex: none; background: #1d1d1d; color: #f0f0f0; display: flex; align-items: center; }
.topbar-left { width: 952px; display: flex; align-items: center; padding-left: 12px; line-height: 27px; }
.activities { width: 97px; letter-spacing: .35px; }
.app-ico { margin: -1px 6px 0 0; }
.app-name { width: 109px; letter-spacing: .1px; }
.caret { border: 5px solid transparent; border-top: 6px solid #f2f2f2; border-bottom: 0; }
.clock { display: flex; align-items: center; gap: 13px; padding-bottom: 2px; letter-spacing: .1px; }
.dot { width: 8px; height: 8px; border-radius: 50%; background: #f2f2f2; }
.tray { margin-left: auto; margin-right: 15px; display: flex; align-items: center; gap: 12px; padding-bottom: 2px; }
.tray svg:first-child { margin-right: 1px; }
.tray .caret { margin-left: -3px; }

.workspace { flex: 1; display: flex; min-height: 0; }

/* dock */
.dock { width: 72px; background: linear-gradient(#4a2020, #3d1b2b 12%, #351a30 45%, #291527 75%, #22161f); padding-top: 2px; display: flex; flex-direction: column; border-right: 1px solid #1c0f18; }
.app { height: 68px; position: relative; display: flex; align-items: center; justify-content: center; }
.app.active::before { content: ""; position: absolute; inset: 2px 3px 2px 4px; background: #503f50; border-radius: 4px; }
.app svg { position: relative; }
.run { position: absolute; left: 4px; top: 31px; width: 6px; height: 6px; border-radius: 50%; background: #e95420; }
.run.two { top: 27px; box-shadow: 0 9px #e95420; }
.run.three { top: 22px; box-shadow: 0 9px #e95420, 0 18px #e95420; }
.grid9 { display: grid; grid-template-columns: repeat(3, 6px); gap: 6px; margin: auto auto 19px 21px; }
.grid9 i { width: 6px; height: 6px; border-radius: 1px; background: #f0f0ee; }

/* browser chrome */
.browser { flex: 1; display: flex; flex-direction: column; min-width: 0; background: #f7f7f7; }
.tabs { height: 34px; flex: none; background: #322f30; border-top: 1px solid #4a4748; padding-left: 8px; display: flex; align-items: center; }
.tab { width: 239px; height: 33px; padding: 0 10px 1px 12px; display: flex; align-items: center; color: #e9e9e9; font-size: 14.500px; letter-spacing: .1px; position: relative; }
.tab span { margin: -1px 0 0 8px; flex: 1; overflow: hidden; }
.tab.wide { letter-spacing: .4px; }
.tab.on { background: #f7f7f7; color: #444; border-radius: 7px 7px 0 0; letter-spacing: .25px; }
.tab.sep + .tab.sep::before { content: ""; position: absolute; left: 0; top: 7px; height: 20px; width: 1px; background: #6a6768; }
.tab .fade { letter-spacing: .15px; -webkit-mask-image: linear-gradient(90deg, #000 145px, transparent 180px); mask-image: linear-gradient(90deg, #000 145px, transparent 180px); }
.tabend { width: 1px; height: 20px; background: #6a6768; }
.x { width: 10px; height: 10px; flex: none; background: linear-gradient(45deg, transparent 43%, currentColor 43% 57%, transparent 57%), linear-gradient(-45deg, transparent 43%, currentColor 43% 57%, transparent 57%); }
.plus { margin-left: 15px; }
.winctl { margin-left: auto; margin-right: 13px; display: flex; align-items: center; gap: 28px; padding-bottom: 1px; }
.winctl svg:last-child { margin-left: -4px; }
.toolbar { height: 38px; flex: none; display: flex; align-items: center; padding-left: 14px; }
.navs { display: flex; gap: 16px; width: 94px; }
.omnibox { width: 1632px; height: 30px; border-radius: 15px; background: #fff; display: flex; align-items: center; padding: 0 10px 0 11px; }
.url { margin: -1px 0 0 9px; flex: 1; color: #6c6e72; letter-spacing: -.08px; }
.url b { color: #111; font-weight: 400; }
.omnibox svg:last-child { margin-left: 17px; }
.panel { margin-left: 15px; }
.avatar { margin: 0 19px 0 14px; }
.toolbar > svg:last-child { margin-left: 1px; }
.bookmarks { height: 33px; flex: none; border-bottom: 1px solid #c2cac3; padding: 0 0 6px 14px; display: grid; grid-template-columns: 79px 100px 77px 151px 146px 150px 148px 150px 151px 149px 151px 151px 201px auto; align-items: center; color: #3f4043; letter-spacing: 0; }
.bookmarks a { display: flex; align-items: center; gap: 8px; }
.bookmarks a:nth-child(n+4) { letter-spacing: .45px; }
.bookmarks svg { margin-top: 1px; }
.more { font-size: 18px; margin-left: 2px; }

/* viewport */
.viewport { flex: 1; display: flex; min-height: 0; }
.page { flex: 1; background: #fff; display: flex; flex-direction: column; min-width: 0; }
.scrollbar { width: 15px; background: #f1f1f1; border-left: 1px solid #e4e4e4; display: flex; flex-direction: column; align-items: center; padding: 6px 0; }
.up { border: 4px solid transparent; border-bottom: 5px solid #8c8c8c; border-top: 0; margin-bottom: 5px; }
.down { border: 4px solid transparent; border-top: 5px solid #505050; border-bottom: 0; margin-top: auto; }
.thumb { width: 11px; height: 604px; background: #c1c1c1; }

.jheader { height: 56px; flex: none; background: #000; display: flex; align-items: center; color: #fff; padding-left: 19px; font-size: 16px; font-weight: 700; letter-spacing: -.5px; }
.brand { font: 700 29px "Liberation Serif", serif; letter-spacing: -.2px; margin: -4px 0 0 13px; }
.search { margin-left: auto; width: 300px; height: 40px; background: #fff; border-radius: 4px; display: flex; align-items: center; padding: 0 10px 0 11px; font-weight: 400; color: #6e7378; letter-spacing: -.3px; }
.search span { flex: 1; margin-left: 13px; }
.bell { margin-left: 24px; }
.badge { margin-left: 8px; width: 20px; height: 20px; border-radius: 4px; text-align: center; line-height: 20px; letter-spacing: 0; }
.warn { background: #ff9800; }
.alert { background: #dc3545; margin-left: 7px; }
.shield { margin-left: 23px; }
.user { margin-left: 24px; }
.uname { margin-left: 7px; width: 81px; letter-spacing: -.35px; }
.exit { margin: 0 4px 0 0; }
.logout { width: 79px; letter-spacing: -.4px; }
.crumbs { height: 40px; flex: none; background: #f8f8f8; display: flex; align-items: center; padding-left: 19px; font-size: 16px; font-weight: 700; color: #4d545d; }
.crumbs i { border: 4px solid transparent; border-left: 5px solid #333; border-right: 0; }
.c1 { width: 107px; letter-spacing: -.55px; }
.c2 { width: 129px; margin-left: 14px; letter-spacing: 0; }

.body { flex: 1; display: flex; min-height: 0; }
.side { width: 340px; border-right: 1px solid #eaeff2; padding-top: 18px; }
.tasks { list-style: none; margin: 0; padding: 0; display: flex; flex-direction: column; gap: 4px; height: 763px; }
.tasks li { height: 40px; display: flex; align-items: center; gap: 8px; padding: 0 0 2px 20px; font-weight: 500; letter-spacing: -.2px; }
.tasks li svg { margin-top: 2px; }
.tasks .sel { background: #e9eff2; border-left: 4px solid #0b84cf; padding-left: 16px; }
.tasks .syntax { margin-top: -2px; gap: 9px; padding-left: 21px; }
.tasks .claims { margin-top: -1px; }
.tasks .claims svg { margin-top: 0; }
.bh-head { height: 42px; background: #e9eff2; display: flex; align-items: center; padding: 0 25px 0 19px; font-weight: 700; letter-spacing: -.2px; }
.bh-title { margin-left: 13px; flex: 1; padding-bottom: 4px; }
.trend { text-decoration: underline; margin-right: 15px; padding-bottom: 4px; }
.filter { margin: 8px 8px 0; height: 34px; border: 2px solid #ccc; border-radius: 6px; display: flex; align-items: center; gap: 8px; padding: 0 0 1px 9px; color: #757575; letter-spacing: 0; }

.main { flex: 1; padding: 39px 36px 0 32px; min-width: 0; }
h1 { font-size: 32px; line-height: 40px; margin: 0; letter-spacing: 0; }
h2 { font-size: 26.500px; line-height: 34px; margin: 27px 0 0; letter-spacing: .6px; }
.actions { display: flex; flex-direction: column; align-items: flex-end; gap: 13px; margin-top: 12px; font-size: 12px; font-weight: 700; letter-spacing: -.22px; }
.desc { display: flex; align-items: center; gap: 3px; color: #0b6aa2; height: 20px; width: 125px; }
.disable { width: 123px; height: 32px; border: 0; border-radius: 4px; background: #0b6aa2; color: #fff; font: inherit; letter-spacing: -.15px; padding-bottom: 3px; }
.recent { display: flex; align-items: center; gap: 5px; margin: 17px 0 0 18px; height: 46px; color: #0b6aa2; font-weight: 700; letter-spacing: -.45px; }

.stageview { display: flex; margin-top: 9px; width: 1020px; }
.left { width: 238px; padding-top: 1px; }
.legend { height: 145px; display: flex; flex-direction: column; justify-content: flex-end; text-align: right; line-height: 21px; padding: 0 14px 3px 0; border-bottom: 1px solid #ccc; background: linear-gradient(transparent 137px, #eee); letter-spacing: -.35px; }
.build { height: 83px; margin-bottom: 2px; border: 1px solid #ddd; border-top: 0; border-right: 0; padding: 7px 0 0 6px; }
.build + .build { border-top: 1px solid #ddd; }
.pill { width: 34px; height: 17px; border-radius: 9px; background: #8aabd2; color: #fff; font-size: 11px; font-weight: 700; line-height: 17px; text-align: center; letter-spacing: 0; text-shadow: 0 1px 1px #567; position: relative; z-index: 1; }
.info { display: flex; margin: -4px 0 0 16px; font-size: 11px; text-align: center; letter-spacing: -.15px; }
.date { width: 55px; height: 47px; padding-top: 1px; line-height: 22px; background: #fff; box-shadow: 0 1px 2px #aaa; }
.commits { width: 55px; height: 47px; line-height: 16px; padding-top: 5px; color: #fff; background: #9f9f9f; border-radius: 0 4px 4px 0; box-shadow: inset 0 1px 1px #777; }
.stages { width: 782px; height: 317px; display: grid; grid-template-columns: repeat(6, 130px); border: 1px solid #e7e7ea; box-shadow: 1px 2px 4px #aaa; }
.col { position: relative; border-right: 1px solid #e9e9ec; text-align: center; background: #e9f7ea; }
.name { height: 93px; display: flex; align-items: center; justify-content: center; font-weight: 700; line-height: 21px; background: #fff; border-bottom: 1px solid #ddd; color: #333; padding-bottom: 2px; }
.odd .name { background: #f6f6f6; }
.avg { height: 51px; padding: 6px 10px 0 6px; line-height: 21px; background: linear-gradient(#f1f1f1 75%, #ddd); }
.odd .avg { background: linear-gradient(#e8e8e8 75%, #d2d2d2); }
.bar { height: 5px; margin-top: 4px; border: 1px solid #ccc; background: #e6e6e6; }
.bar i { display: block; height: 5px; margin-top: -1px; background: linear-gradient(#82aee6, #4a7bc8); }
.p1 i { width: 4px; margin-left: -1px; }
.p2 i { width: 4px; margin-left: 3px; }
.p3 i { width: 44px; margin-left: 7px; }
.p4 i { width: 8px; margin-left: 51px; }
.p5 i { width: 52px; margin-left: 59px; }
.p6 i { width: 1px; margin-left: 111px; }
.run-cell { height: 85px; padding: 3px 1px 0; }
.run-cell div { height: 82px; border: 1px solid #c8d6ca; border-radius: 4px; background: #e3ffe2; color: #8d9b8d; line-height: 66px; letter-spacing: -.1px; }
.odd .run-cell div { background: #def7dc; }
.hot div { background: radial-gradient(ellipse at 60% 50%, #ebfdeb, #f6fff6) !important; border-color: #bbb; }
.mid div { font-size: 16.500px; color: #6d796d; }
.big div { font-size: 17.500px; color: #566056; }
.popup { position: absolute; left: 2px; top: 26px; width: 126px; height: 117px; background: rgba(224,255,244,.82); border: 1px solid #6fa986; border-radius: 3px; box-shadow: 0 1px 5px rgba(0,0,0,.4); text-align: left; padding: 15px; font-weight: 700; }
.ok { color: #4a4a4a; line-height: 22px; }
.logs { margin-top: 20px; width: 71px; height: 42px; border-radius: 4px; background: #9bb9ac; color: #fff; display: flex; align-items: center; justify-content: center; gap: 3px; text-shadow: 0 1px 2px #577; letter-spacing: -.1px; }
.tip { position: absolute; left: 13px; top: 115px; border-top: 15px solid #3c4a42; border-left: 16px solid transparent; }
.perma { margin-top: 29px; letter-spacing: -.05px; }
.links { margin: 13px 0 0; padding: 0 0 0 40px; line-height: 21px; font-weight: 700; font-size: 14px; letter-spacing: -.27px; }
.links li::marker { font-size: 12px; }
.links a { color: #0b6aa2; }
```
